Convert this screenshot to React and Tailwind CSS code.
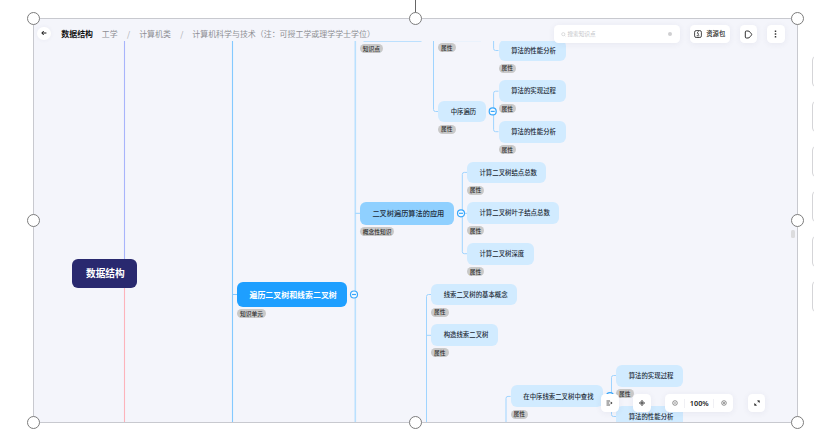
const NODE_STYLES = {
  root: "rounded-[6px] bg-[#29296f] pt-[1.5px] pl-[14px] text-[9.7px] font-bold text-white",
  unit: "rounded-[6px] bg-[#1e9fff] pl-[12.5px] text-[7.95px] font-bold text-white",
  concept: "rounded-[6px] bg-[#8fd0ff] pt-[0.6px] pl-[12.7px] text-[7.2px] font-medium text-[#1d2b38]",
  leaf: "rounded-[6px] bg-[#d1ebff] pt-[1px] pl-[12.7px] text-[6.4px] font-medium text-[#1c2a36]",
};

const nodes = [
  { kind: "leaf", text: "算法的性能分析", x: 498.5, y: 39.5, w: 67, h: 21.7, tag: "属性" },
  { kind: "leaf", text: "算法的实现过程", x: 498.5, y: 80.2, w: 67, h: 21.7, tag: "属性" },
  { kind: "leaf", text: "中序遍历", x: 438, y: 100.8, w: 48, h: 21.5, tag: "属性" },
  { kind: "leaf", text: "算法的性能分析", x: 498.5, y: 121, w: 67, h: 21.7, tag: "属性" },
  { kind: "leaf", text: "计算二叉树结点总数", x: 466.8, y: 161.6, w: 79.5, h: 21.7, tag: "属性" },
  { kind: "concept", text: "二叉树遍历算法的应用", x: 359.7, y: 202, w: 94.2, h: 22.6, tag: "概念性知识" },
  { kind: "leaf", text: "计算二叉树叶子结点总数", x: 466.8, y: 202.3, w: 92.2, h: 21.7, tag: "属性" },
  { kind: "leaf", text: "计算二叉树深度", x: 466.8, y: 243, w: 67, h: 21.7, tag: "属性" },
  { kind: "root", text: "数据结构", x: 72, y: 258.5, w: 64.5, h: 29.6 },
  { kind: "unit", text: "遍历二叉树和线索二叉树", x: 237, y: 282, w: 110, h: 25, tag: "知识单元" },
  { kind: "leaf", text: "线索二叉树的基本概念", x: 431, y: 283.6, w: 86, h: 21.7, tag: "属性" },
  { kind: "leaf", text: "构造线索二叉树", x: 431, y: 324.3, w: 67, h: 21.7, tag: "属性" },
  { kind: "leaf", text: "在中序线索二叉树中查找", x: 510.6, y: 385.4, w: 92.4, h: 21.7, tag: "属性" },
  { kind: "leaf", text: "算法的实现过程", x: 616, y: 365, w: 67, h: 21.7, tag: "属性" },
  { kind: "leaf", text: "算法的性能分析", x: 616, y: 405.7, w: 67, h: 21.7 },
];

const looseTags = [
  { text: "知识点", x: 359.7, y: 44.2 },
  { text: "属性", x: 438, y: 43.4 },
];

const toggles = [
  [492.7, 111.4],
  [461, 213.3],
  [354, 294.5],
  [610, 396.2],
];

function Tag({ text, x, y }) {
  return (
    <span
      className="absolute flex h-[9px] items-center rounded-full bg-[#c9c9c9] px-[3px] text-[5.75px] font-medium leading-none whitespace-nowrap text-[#2c2c2c]"
      style={{ left: x, top: y }}
    >
      {text}
    </span>
  );
}

function MindMap() {
  return (
    <div className="relative min-h-0 flex-1 overflow-hidden">
      <div className="absolute -top-[41px] -left-[34px] h-[440px] w-[814px]">
        <svg className="absolute inset-0" width="814" height="440" fill="none">
          <path d="M124.5 40V270" stroke="#a8b4fb" strokeWidth="1.1" />
          <path d="M124.5 280V424" stroke="#fdb3bb" strokeWidth="1.1" />
          <path d="M232.5 40V424M232.5 294.5H237" stroke="#83c9ff" strokeWidth="1.1" />
          <path d="M355.3 40V424" stroke="#b9e0fe" strokeWidth="1.6" />
          <path d="M355 213.4H360M363.5 41.2H421.5" stroke="#a9d9ff" strokeWidth="1.1" />
          <path d="M442 40.8H481" stroke="#d1ebff" strokeWidth="0.8" />
          <g stroke="#9fd4ff" strokeWidth="1">
            <path d="M433.5 40V109.5Q433.5 111.5 435.5 111.5H438" />
            <path d="M493.6 40V48.5Q493.6 50.5 495.6 50.5H498.5" />
            <path d="M498.5 91.2H495.6Q493.6 91.2 493.6 93.2V129.7Q493.6 131.7 495.6 131.7H498.5" />
            <path d="M467 172.4H464.3Q462.3 172.4 462.3 174.4V251.7Q462.3 253.7 464.3 253.7H467M462.3 213.3H467" />
            <path d="M431 294.5H428.5Q426.5 294.5 426.5 296.5V424M426.5 335.3H431" />
            <path d="M510.6 396.4H508Q506 396.4 506 398.4V424" />
            <path d="M616 375.5H613.5Q611.5 375.5 611.5 377.5V414.5Q611.5 416.5 613.5 416.5H616" />
          </g>
          {toggles.map(([cx, cy]) => (
            <g key={`${cx}-${cy}`} stroke="#38a7fb" strokeWidth="1.2">
              <circle cx={cx} cy={cy} r="3.5" fill="#f7fbff" />
              <path d={`M${cx - 2} ${cy}h4`} />
            </g>
          ))}
        </svg>
        {nodes.map((n) => (
          <div
            key={`${n.x}-${n.y}`}
            className={`absolute flex items-center leading-none whitespace-nowrap ${NODE_STYLES[n.kind]}`}
            style={{ left: n.x, top: n.y, width: n.w, height: n.h }}
          >
            {n.text}
          </div>
        ))}
        {nodes
          .filter((n) => n.tag)
          .map((n) => (
            <Tag key={`${n.x}-${n.y}`} text={n.tag} x={n.x} y={n.y + n.h + 2.4} />
          ))}
        {looseTags.map((t) => (
          <Tag key={t.x} {...t} />
        ))}
        <div className="absolute top-[229.5px] left-[791px] h-[8.5px] w-[4px] rounded-[1.5px] bg-[#dcdcde]" />
      </div>
    </div>
  );
}

const CARD = "flex h-[18px] items-center justify-center rounded-[4.5px] bg-white shadow-[0_1px_6px_rgba(60,60,100,0.07)]";

function Header() {
  return (
    <header className="relative z-10 flex h-[22px] shrink-0 items-start pr-[12.5px] pl-[3px] text-[7.95px] leading-none whitespace-nowrap">
      <button className="mt-[7.7px] flex size-[13.5px] items-center justify-center rounded-full bg-white shadow-[0_0_4px_rgba(60,60,100,0.06)]">
        <svg width="6" height="6" viewBox="0 0 6 6" fill="none" stroke="#111" strokeWidth="1">
          <path d="M5.4 3H.9M2.7 1L.8 3l1.9 2" />
        </svg>
      </button>
      <div className="mt-[10.8px] ml-[10.8px] flex text-[#8e8f94]">
        <span className="font-bold text-[#111]">数据结构</span>
        <span className="ml-[8.8px]">工学</span>
        <span className="ml-[9.2px] text-[#a8a9ae]">/</span>
        <span className="ml-[9.1px]">计算机类</span>
        <span className="ml-[9.4px] text-[#a8a9ae]">/</span>
        <span className="ml-[8.9px]">计算机科学与技术（注：可授工学或理学学士学位）</span>
      </div>
      <div className="mt-[6px] ml-auto flex">
        <div className={`${CARD} w-[126px] pr-[7.5px] pl-[7.5px]`}>
          <svg width="5" height="5" viewBox="0 0 5 5" fill="none" stroke="#c6c7ca" strokeWidth=".6">
            <circle cx="2.3" cy="2.2" r="1.6" />
            <path d="M3.5 3.4l1 1" />
          </svg>
          <span className="ml-[1.5px] pt-[0.8px] text-[5.6px] text-[#c4c5c9]">搜索知识点</span>
          <span className="ml-auto size-[4.5px] rounded-full bg-[#cfcfd1]" />
        </div>
        <button className={`${CARD} ml-[10px] w-[40px]`}>
          <svg width="8" height="8" viewBox="0 0 8 8" fill="none" stroke="#333" strokeWidth=".9">
            <rect x=".6" y=".6" width="6.8" height="6.9" rx="1.6" />
            <path d="M4.6 1.2L3.1 3.1l1.8.9-1.5 1.4M2.6 5.8H5.4" strokeWidth=".75" />
          </svg>
          <span className="ml-[4.5px] pt-[0.6px] text-[6.3px] font-medium text-[#222]">资源包</span>
        </button>
        <button className={`${CARD} ml-[10px] w-[17.5px]`}>
          <svg width="9" height="9" viewBox="0 0 9 9" fill="none" stroke="#333" strokeWidth="1" strokeLinejoin="round">
            <path d="M1.3 2Q1.3 1 2.4 1H4Q5.2 1 6.2 2.3L7.4 3.8Q8 4.5 7.4 5.2L6.2 6.7Q5.2 8 4 8H2.4Q1.3 8 1.3 7Z" />
          </svg>
        </button>
        <button className={`${CARD} ml-[9.5px] w-[18px]`}>
          <svg width="3" height="8" viewBox="0 0 3 8" fill="#333">
            <rect x=".7" y=".4" width="1.6" height="1.6" rx=".4" />
            <rect x=".7" y="3.2" width="1.6" height="1.6" rx=".4" />
            <rect x=".7" y="6" width="1.6" height="1.6" rx=".4" />
          </svg>
        </button>
      </div>
    </header>
  );
}

function ZoomBar() {
  return (
    <div className="absolute top-[375px] left-[567px] z-10 flex">
      <button className={`${CARD} w-[17.5px]`}>
        <svg width="7" height="6" viewBox="0 0 7 6" fill="none" stroke="#333" strokeWidth=".8">
          <path d="M.5 1H4M.5 3H3.3M.5 5H4" />
          <path d="M4.7 1.6L6.5 3 4.7 4.4Z" fill="#333" stroke="none" />
        </svg>
      </button>
      <button className={`${CARD} ml-[14.7px] w-[17.8px]`}>
        <svg width="6" height="6" viewBox="0 0 6 6" fill="none" stroke="#555" strokeWidth=".8">
          <path d="M3 .5L5.5 3 3 5.5.5 3Z" strokeLinejoin="round" />
          <circle cx="3" cy="3" r="1.1" fill="#444" stroke="none" />
          <path d="M3 .2V2M3 4V5.8M.2 3H2M4 3H5.8" />
        </svg>
      </button>
      <div className={`${CARD} ml-[14.3px] w-[68px]`}>
        <button className="flex w-[19px] justify-center">
          <svg width="6" height="6" viewBox="0 0 6 6" fill="none" stroke="#555" strokeWidth=".65">
            <circle cx="3" cy="3" r="2.3" />
            <path d="M2 3H4" />
          </svg>
        </button>
        <span className="flex h-[9px] w-[30px] items-center justify-center border-x border-[#f0f0f4] font-['Noto_Sans'] text-[7.3px] font-semibold text-[#222]">
          100%
        </span>
        <button className="flex w-[19px] justify-center">
          <svg width="6" height="6" viewBox="0 0 6 6" fill="none" stroke="#555" strokeWidth=".65">
            <circle cx="3" cy="3" r="2.3" />
            <path d="M2 3H4M3 2V4" />
          </svg>
        </button>
      </div>
      <button className={`${CARD} ml-[14.7px] w-[17.5px]`}>
        <svg width="6" height="6" viewBox="0 0 6 6" fill="none" stroke="#333" strokeWidth=".9">
          <path d="M3.3 .8H5.3V2.7M5.2 .9L3.9 2.1M.7 3.3V5.3H2.7M.8 5.2L2.1 3.9" />
        </svg>
      </button>
    </div>
  );
}

const HANDLES = [
  "top-[12px] left-[27px]",
  "top-[12px] left-[409px]",
  "top-[12px] left-[791px]",
  "top-[214px] left-[27px]",
  "top-[214px] left-[791px]",
  "top-[416px] left-[27px]",
  "top-[416px] left-[409px]",
  "top-[416px] left-[791px]",
];

export default function App() {
  return (
    <div className="relative flex h-[440px] w-[814px] overflow-hidden bg-white pt-[18px] pl-[33px] font-['Noto_Sans_CJK_SC',sans-serif]">
      <main className="relative flex h-[405px] w-[765px] shrink-0 flex-col border border-[#c8c9cf] bg-[#f4f5fb]">
        <Header />
        <MindMap />
        <ZoomBar />
      </main>
      <aside className="ml-[14px] flex w-[40px] shrink-0 flex-col gap-[14px] pt-[38px]">
        {[0, 1, 2, 3, 4, 5].map((i) => (
          <div key={i} className="h-[31px] shrink-0 rounded-[4px] border border-[#d5d5d8] bg-white" />
        ))}
      </aside>
      <div className="absolute top-0 left-[415px] z-20 h-[13px] w-px bg-[#666]" />
      {HANDLES.map((pos) => (
        <div key={pos} className={`absolute z-20 size-[13px] rounded-full border border-[#7c7c7c] bg-white ${pos}`} />
      ))}
    </div>
  );
}
